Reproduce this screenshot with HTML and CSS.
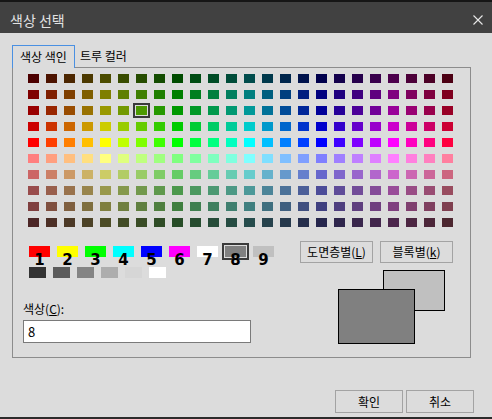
FILE: index.html
```html
<!DOCTYPE html>
<html>

<head>
    <meta charset="UTF-8">
    <title>색상 선택</title>
    <link rel="stylesheet" href="styles.css">
</head>

<body>
    <div class="window">
        <div class="titlebar">
            <span class="title">색상 선택</span>
            <svg class="close" width="10" height="10" viewBox="0 0 10 10">
                <path d="M0.5 0.5 L9.5 9.5 M9.5 0.5 L0.5 9.5" stroke="#e8e8e8" stroke-width="1.1" fill="none" />
            </svg>
        </div>

        <div class="content">
            <div class="tabs">
                <div class="tab active">색상 색인</div>
                <div class="tab">트루 컬러</div>
            </div>

            <div class="panel">
                <!-- index colours 10..249, filled in by script.js -->
                <div id="aci" class="aciGrid"></div>

                <div class="lower">
                    <div class="leftCol">
                        <div class="swatches">
                            <div class="swItem"><div class="sw" style="background:#ff0000"></div><div class="num">1</div></div>
                            <div class="swItem"><div class="sw" style="background:#ffff00"></div><div class="num">2</div></div>
                            <div class="swItem"><div class="sw" style="background:#00ff00"></div><div class="num">3</div></div>
                            <div class="swItem"><div class="sw" style="background:#00ffff"></div><div class="num">4</div></div>
                            <div class="swItem"><div class="sw" style="background:#0000ff"></div><div class="num">5</div></div>
                            <div class="swItem"><div class="sw" style="background:#ff00ff"></div><div class="num">6</div></div>
                            <div class="swItem"><div class="sw" style="background:#ffffff"></div><div class="num">7</div></div>
                            <div class="swItem"><div class="sw picked" style="background:#808080"></div><div class="num">8</div></div>
                            <div class="swItem"><div class="sw" style="background:#c0c0c0"></div><div class="num">9</div></div>
                        </div>
                        <div class="grays">
                            <div class="gray" style="background:#333333"></div>
                            <div class="gray" style="background:#5b5b5b"></div>
                            <div class="gray" style="background:#848484"></div>
                            <div class="gray" style="background:#adadad"></div>
                            <div class="gray" style="background:#d6d6d6"></div>
                            <div class="gray" style="background:#ffffff"></div>
                        </div>

                        <div class="fieldLabel">색상(<u>C</u>):</div>
                        <div class="field">8</div>
                    </div>

                    <div class="rightCol">
                        <div class="btnRow">
                            <div class="btn">도면층별(<u>L</u>)</div>
                            <div class="btn">블록별(<u>k</u>)</div>
                        </div>
                        <div class="preview">
                            <div class="oldColor"></div>
                            <div class="newColor"></div>
                        </div>
                    </div>
                </div>
            </div>

            <div class="footer">
                <div class="btn footBtn">확인</div>
                <div class="btn footBtn">취소</div>
            </div>
        </div>
    </div>
    <script src="script.js"></script>
</body>

</html>
```

FILE: styles.css
```css
* {
    box-sizing: border-box;
}

html,
body {
    margin: 0;
}

body {
    width: 492px;
    height: 419px;
    overflow: hidden;
    background: #dcdcdc;
    color: #000;
    font-family: "Noto Sans CJK KR", "Noto Sans", sans-serif;
    font-size: 12px;
}

.window {
    height: 419px;
    border-top: 2px solid #161616;
    border-bottom: 2px solid #2b2b2b;
    display: flex;
    flex-direction: column;
}

.titlebar {
    height: 31px;
    background: #414141;
    color: #e2e2e2;
    display: flex;
    justify-content: space-between;
    align-items: flex-start;
    padding: 9px 9px 0 10px;
    font-size: 14px;
    line-height: 18px;
}

.close {
    margin-top: 4px;
}

.content {
    flex: 1;
    padding: 12px 0 0 12px;
}

.tabs {
    display: flex;
    height: 22px;
}

.tab {
    height: 22px;
    line-height: 22px;
    padding: 0 5px;
}

.tab.active {
    position: relative;
    z-index: 1;
    width: 63px;
    height: 23px;
    padding: 0;
    text-align: center;
    border: 1px solid #4a90e2;
    border-bottom: 0;
    line-height: 21px;
    background: #dcdcdc;
}

.panel {
    width: 459px;
    height: 291px;
    border: 1px solid #8c8c8c;
    padding: 6px 0 0 10px;
}

.aciGrid {
    display: grid;
    grid-template-columns: repeat(24, 11px);
    grid-auto-rows: 9px;
    column-gap: 7px;
    row-gap: 7px;
    margin-left: 5px;
}

.aciGrid .picked,
.sw.picked {
    box-shadow: 0 0 0 1px #dcdcdc, 0 0 0 3px #3a3a3a;
}

.lower {
    display: flex;
}

.leftCol {
    width: 267px;
}

.swatches {
    display: flex;
    gap: 7px;
    margin: 19px 0 0 6px;
}

.swItem {
    width: 21px;
}

.sw {
    height: 11px;
}

.num {
    margin-top: -5px;
    text-align: center;
    font-family: "DejaVu Sans", sans-serif;
    font-weight: bold;
    font-size: 15px;
    line-height: 16px;
}

.grays {
    display: flex;
    gap: 7px;
    margin: -1px 0 0 6px;
}

.gray {
    width: 17px;
    height: 11px;
}

.fieldLabel {
    margin-top: 23px;
    line-height: 16px;
}

.field {
    margin-top: 3px;
    width: 228px;
    height: 23px;
    border: 1px solid #7a7a7a;
    background: #fff;
    padding-left: 4px;
    font-size: 13px;
    line-height: 21px;
}

.rightCol {
    margin-left: 10px;
}

.btnRow {
    display: flex;
    gap: 7px;
    margin-top: 14px;
}

.btn {
    width: 73px;
    height: 22px;
    border: 1px solid #a3a3a3;
    text-align: center;
    line-height: 20px;
}

.preview {
    position: relative;
    height: 81px;
}

.oldColor,
.newColor {
    position: absolute;
    border: 1px solid #000;
}

.oldColor {
    left: 83px;
    top: 7px;
    width: 62px;
    height: 41px;
    background: #c0c0c0;
}

.newColor {
    left: 38px;
    top: 26px;
    width: 77px;
    height: 55px;
    background: #808080;
}

.footer {
    display: flex;
    justify-content: flex-end;
    gap: 3px;
    margin: 32px 18px 0 0;
}

.footBtn {
    width: 68px;
    height: 23px;
    line-height: 21px;
}
```

FILE: script.js
```js
// AutoCAD index colours 10..249: 24 hues, 10 shades each.
// Rows top to bottom: dark -> full, then pastel full -> dark.
var shades = [
    [0x4c, false], [0x7f, false], [0x99, false], [0xcc, false], [0xff, false],
    [0xff, true], [0xcc, true], [0x99, true], [0x7f, true], [0x4c, true]
];

function hueParts(h) {
    var s = Math.floor(h / 4);
    var t = (h % 4) / 4;
    switch (s) {
        case 0: return [1, t, 0];
        case 1: return [1 - t, 1, 0];
        case 2: return [0, 1, t];
        case 3: return [0, 1 - t, 1];
        case 4: return [t, 0, 1];
        default: return [1, 0, 1 - t];
    }
}

function hex(n) {
    return n.toString(16).padStart(2, "0");
}

var grid = document.getElementById("aci");
for (var r = 0; r < shades.length; r++) {
    var v = shades[r][0];
    var pastel = shades[r][1];
    for (var h = 0; h < 24; h++) {
        var parts = hueParts(h);
        var rgb = parts.map(function (f) {
            return pastel ? Math.floor(v / 2 + f * v / 2) : Math.floor(f * v);
        });
        var cell = document.createElement("div");
        cell.style.background = "#" + rgb.map(hex).join("");
        if (r === 2 && h === 6) {
            cell.className = "picked";
        }
        grid.appendChild(cell);
    }
}
```
